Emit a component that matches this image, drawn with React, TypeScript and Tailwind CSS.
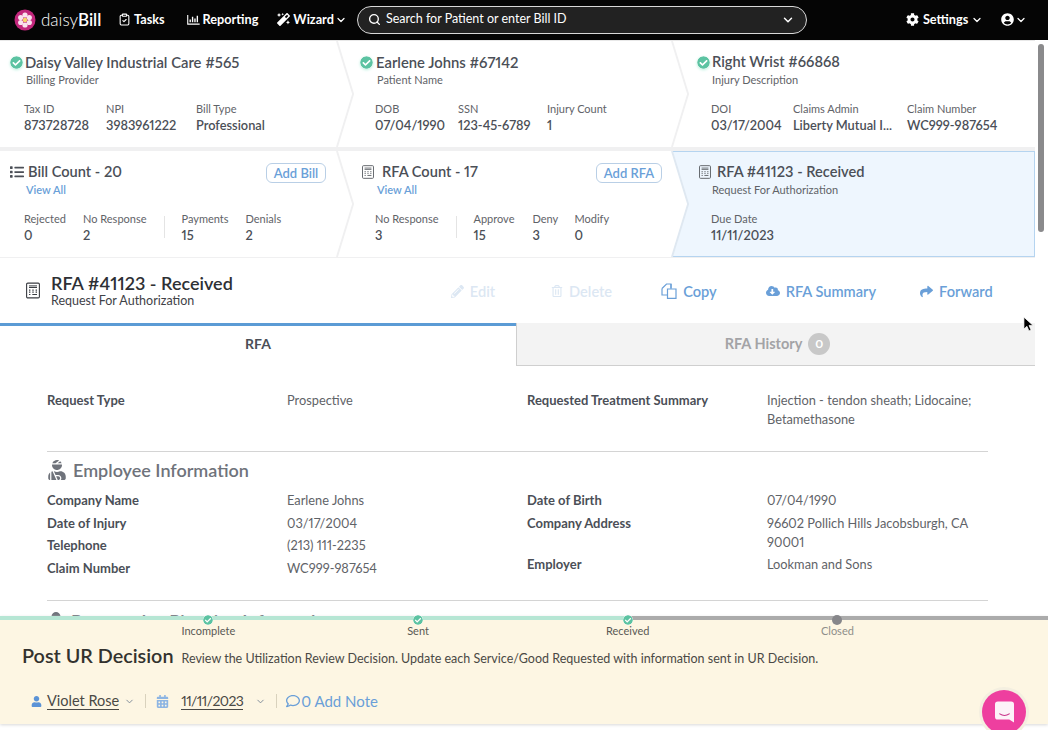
import { ChevronDown, ClipboardCheck, Search } from 'lucide-react';
import { type FC, type ReactNode } from 'react';
import {
  FaCalendarAlt,
  FaCheckCircle,
  FaCloudDownloadAlt,
  FaCog,
  FaList,
  FaMagic,
  FaPencilAlt,
  FaRegComment,
  FaRegTrashAlt,
  FaShare,
  FaUser,
  FaUserCircle,
  FaUserInjured,
} from 'react-icons/fa';

const RfaIcon: FC<{ className?: string }> = ({ className }) => (
  <svg viewBox="0 0 14 16" className={className} fill="none" stroke="currentColor">
    <rect x="0.6" y="0.6" width="12.8" height="14.8" rx="1.2" strokeWidth="1.1" />
    <path d="M3 3.4h8M3 5h8" strokeWidth="1" />
    <path d="M3 7.6h1.4M6.3 7.6h1.4M9.6 7.6H11M3 9.6h1.4M6.3 9.6h1.4M9.6 9.6H11M3 12h1.4M6.3 12H11" strokeWidth="1.1" />
  </svg>
);

const Logo: FC = () => (
  <svg viewBox="0 0 22 22" className="size-[22px]">
    <circle cx="11" cy="11" r="10.5" fill="#c2277c" />
    <g fill="#f9e3ee">
      <circle cx="11" cy="6" r="2.6" />
      <circle cx="15.3" cy="8.5" r="2.6" />
      <circle cx="15.3" cy="13.5" r="2.6" />
      <circle cx="11" cy="16" r="2.6" />
      <circle cx="6.7" cy="13.5" r="2.6" />
      <circle cx="6.7" cy="8.5" r="2.6" />
    </g>
    <circle cx="11" cy="11" r="2.2" fill="#f5d66b" />
  </svg>
);

const ReportIcon: FC = () => (
  <svg viewBox="0 0 14 12" className="h-[11px] w-[13px]" fill="none" stroke="white">
    <path d="M0.7 1v10h13" strokeWidth="1.2" />
    <path d="M3.4 9V6M6 9V3M8.6 9V5M11.2 9V2" strokeWidth="1.5" />
  </svg>
);

const CopyIcon: FC = () => (
  <svg viewBox="0 0 16 16" className="size-[16px]" fill="none" stroke="currentColor" strokeWidth="1.2">
    <path d="M1 5.5 5.5 1H10v5M1 5.5V12h5" />
    <path d="M6.5 6H15v9.300H6.500zM10 1v4" />
  </svg>
);

// white arrow point between two neighbouring cards
const CardPoint: FC<{ stroke?: string }> = ({ stroke = '#f0f0f1' }) => (
  <svg
    viewBox="0 0 20 106"
    preserveAspectRatio="none"
    className="absolute top-0 left-full z-10 h-full w-[19px] -translate-x-px"
  >
    <polygon points="0,0 1,0 18,53 1,106 0,106" fill="#ffffff" />
    <polyline points="1,0 18,53 1,106" fill="none" stroke={stroke} strokeWidth="2" />
  </svg>
);

const Stat: FC<{ label: string; value: string; className?: string }> = ({ label, value, className }) => (
  <div className={className}>
    <div className="text-[11px] leading-4 text-[#5f6368]">{label}</div>
    <div className="text-[12.8px] leading-4 font-semibold text-[#4b4f57]">{value}</div>
  </div>
);

const Check: FC = () => (
  <FaCheckCircle className="size-[13px] shrink-0 rounded-full text-[#5cc3a2] shadow-[0_1px_3px_#bdf0df]" />
);

const Divider: FC = () => <div className="mx-[17px] h-[22px] w-px self-center bg-[#e4e4e4]" />;

const AddButton: FC<{ label: string; className?: string }> = ({ label, className }) => (
  <button
    type="button"
    className={`h-5 rounded-[6px] border border-[#b9cfe6] text-[13px] leading-4 font-semibold text-[#6a9fd8] ${className ?? ''}`}
  >
    {label}
  </button>
);

const Action: FC<{ icon: ReactNode; label: string; className: string }> = ({ icon, label, className }) => (
  <div className={`flex items-center gap-[6px] pt-[2px] text-[14.6px] font-semibold ${className}`}>
    {icon}
    {label}
  </div>
);

const Row: FC<{ label: string; children: ReactNode }> = ({ label, children }) => (
  <div className="grid grid-cols-[240px_1fr]">
    <div className="font-bold text-[#4b4f57]">{label}</div>
    <div className="text-[12.8px] text-[#5f6368]">{children}</div>
  </div>
);

const Step: FC<{ label: string; done?: boolean }> = ({ label, done = true }) => (
  <div className="flex w-[209.7px] flex-col items-center">
    {done ? (
      <FaCheckCircle className="-mt-[5px] size-[10px] rounded-full bg-white text-[#5cc3a2]" />
    ) : (
      <div className="-mt-[5px] size-[10px] rounded-full bg-[#86868a]" />
    )}
    <div className={`-mt-px text-[11px] leading-[14px] ${done ? 'text-[#5a5a55]' : 'text-[#8f8f8a]'}`}>{label}</div>
  </div>
);

export default function App() {
  return (
    <div className="relative h-[730px] w-[1048px] overflow-hidden bg-white font-['Lato','Liberation_Sans',sans-serif] text-[#4b4f57] proportional-nums">
      <header className="flex h-10 items-center bg-[#050505] pb-px text-[12.7px] font-bold text-white">
        <div className="ml-[14px]">
          <Logo />
        </div>
        <div className="ml-[5px] w-[64px] text-[17px] leading-none font-light">
          daisy<span className="font-semibold">Bill</span>
        </div>
        <ClipboardCheck className="ml-[13px] size-[13px]" />
        <span className="ml-[3px]">Tasks</span>
        <div className="ml-[22px]">
          <ReportIcon />
        </div>
        <span className="ml-[3px]">Reporting</span>
        <FaMagic className="ml-[19px] size-[13px]" />
        <span className="ml-[3px]">Wizard</span>
        <ChevronDown className="ml-px size-[12px]" strokeWidth={2.5} />
        <div className="ml-[10px] flex h-[28px] w-[450px] items-center rounded-full border border-[#d8d8d8] bg-[#222222] pr-[11px] pl-[10px] text-[12.5px] font-normal">
          <Search className="size-[13px]" strokeWidth={2.5} />
          <span className="ml-[5px] flex-1">Search for Patient or enter Bill ID</span>
          <ChevronDown className="size-[14px]" strokeWidth={2.5} />
        </div>
        <FaCog className="ml-[99px] size-[13px]" />
        <span className="ml-[4px]">Settings</span>
        <ChevronDown className="ml-[3px] size-[12px]" strokeWidth={2.5} />
        <FaUserCircle className="ml-[18px] size-[13px]" />
        <ChevronDown className="ml-px size-[12px]" strokeWidth={2.5} />
      </header>

      <main className="h-[576px] w-[1035px] overflow-hidden">
        <section className="grid grid-cols-[337px_335px_363px] border-t border-[#e8e8e8] bg-[#f0f0f1] pb-[4px]">
          <div className="relative h-[106px] bg-white pt-[11px] pl-[10px]">
            <div className="flex items-center gap-[2px] text-[14.8px] leading-5 font-semibold">
              <Check />
              Daisy Valley Industrial Care #565
            </div>
            <div className="ml-[16px] text-[11px] leading-4 text-[#5f6368]">Billing Provider</div>
            <div className="mt-[13px] ml-[14px] flex">
              <Stat label="Tax ID" value="873728728" className="w-[82px]" />
              <Stat label="NPI" value="3983961222" className="w-[90px]" />
              <Stat label="Bill Type" value="Professional" />
            </div>
            <CardPoint />
          </div>
          <div className="relative h-[106px] bg-white pt-[11px] pl-[23px]">
            <div className="flex items-center gap-[3px] text-[14.8px] leading-5 font-semibold">
              <Check />
              Earlene Johns #67142
            </div>
            <div className="ml-[17px] text-[11px] leading-4 text-[#5f6368]">Patient Name</div>
            <div className="mt-[13px] ml-[15px] flex">
              <Stat label="DOB" value="07/04/1990" className="w-[83px]" />
              <Stat label="SSN" value="123-45-6789" className="w-[89px]" />
              <Stat label="Injury Count" value="1" />
            </div>
            <CardPoint />
          </div>
          <div className="h-[106px] bg-white pt-[11px] pl-[25px]">
            <div className="flex items-center gap-[2px] text-[14.6px] leading-5 font-semibold">
              <Check />
              Right Wrist #66868
            </div>
            <div className="ml-[15px] text-[11px] leading-4 text-[#5f6368]">Injury Description</div>
            <div className="mt-[13px] ml-[14px] flex">
              <Stat label="DOI" value="03/17/2004" className="w-[82px]" />
              <Stat label="Claims Admin" value="Liberty Mutual I..." className="w-[114px]" />
              <Stat label="Claim Number" value="WC999-987654" />
            </div>
          </div>
        </section>

        <section className="grid grid-cols-[337px_335px_363px] bg-[#f0f0f1] pb-[1px]">
          <div className="relative h-[106px] bg-white pt-[11px] pl-[10px]">
            <div className="flex items-center gap-[4px] text-[14.6px] leading-5 font-semibold">
              <FaList className="size-[14px]" />
              Bill Count - 20
              <AddButton label="Add Bill" className="absolute top-[12px] left-[266px] w-[60px]" />
            </div>
            <div className="ml-[16px] text-[11px] leading-4 font-semibold text-[#6a9fd8]">View All</div>
            <div className="mt-[13px] ml-[14px] flex">
              <Stat label="Rejected" value="0" className="w-[59px]" />
              <Stat label="No Response" value="2" />
              <Divider />
              <Stat label="Payments" value="15" className="w-[64px]" />
              <Stat label="Denials" value="2" />
            </div>
            <CardPoint />
          </div>
          <div className="relative h-[106px] bg-white pt-[11px] pl-[25px]">
            <div className="flex items-center gap-[8px] text-[14.6px] leading-5 font-semibold">
              <RfaIcon className="h-[14px] w-[12px] text-[#5f6368]" />
              RFA Count - 17
              <AddButton label="Add RFA" className="absolute top-[12px] left-[259px] w-[66px]" />
            </div>
            <div className="ml-[15px] text-[11px] leading-4 font-semibold text-[#6a9fd8]">View All</div>
            <div className="mt-[13px] ml-[13px] flex">
              <Stat label="No Response" value="3" />
              <Divider />
              <Stat label="Approve" value="15" className="w-[59px]" />
              <Stat label="Deny" value="3" className="w-[42px]" />
              <Stat label="Modify" value="0" />
            </div>
            <CardPoint stroke="#dfe8f1" />
          </div>
          <div className="h-[106px] border border-[#b5d4f0] bg-[#eef6fe] pt-[10px] pl-[26px]">
            <div className="flex items-center gap-[6px] text-[14.6px] leading-5 font-semibold">
              <RfaIcon className="h-[14px] w-[12px] text-[#5f6368]" />
              RFA #41123 - Received
            </div>
            <div className="ml-[13px] text-[11px] leading-4 text-[#5f6368]">Request For Authorization</div>
            <div className="mt-[13px] ml-[12px] flex">
              <Stat label="Due Date" value="11/11/2023" />
            </div>
          </div>
        </section>

        <section className="flex h-[65px] items-center pl-[26px]">
          <RfaIcon className="h-[17px] w-[14px] text-[#3a3d42]" />
          <div className="ml-[11px] pb-[2px]">
            <div className="text-[18px] leading-[22px] font-semibold text-[#2e3035]">RFA #41123 - Received</div>
            <div className="text-[12.5px] leading-[14px] text-[#3f4247]">Request For Authorization</div>
          </div>
          <Action icon={<FaPencilAlt className="size-[13px]" />} label="Edit" className="ml-[218px] text-[#dce7f3]" />
          <Action icon={<FaRegTrashAlt className="size-[12px]" />} label="Delete" className="ml-[56px] text-[#dce7f3]" />
          <Action icon={<CopyIcon />} label="Copy" className="ml-[49px] text-[#6a9fd8]" />
          <Action icon={<FaCloudDownloadAlt className="size-[14px]" />} label="RFA Summary" className="ml-[49px] text-[#6a9fd8]" />
          <Action icon={<FaShare className="size-[13px]" />} label="Forward" className="ml-[44px] text-[#6a9fd8]" />
        </section>

        <section className="flex h-[43px]">
          <div className="flex w-[516px] items-center justify-center border-t-[3px] border-[#5b9bd5] pb-[5px] text-[14px] font-bold text-[#4b4f57]">
            RFA
          </div>
          <div className="flex flex-1 items-center justify-center gap-[6px] border-b border-l border-[#cfcfcf] bg-[#f3f3f3] pl-[3px] text-[14.5px] font-bold text-[#a3a3a6]">
            RFA History
            <span className="flex size-[22px] items-center justify-center rounded-full bg-[#c8c8c8] text-[12px] text-white">0</span>
          </div>
        </section>

        <section className="mx-[47px] mt-[25px] w-[941px] text-[13px]">
          <div className="grid grid-cols-[480px_1fr] border-b border-[#d4d4d4] pb-[22px] leading-[19px]">
            <Row label="Request Type">Prospective</Row>
            <Row label="Requested Treatment Summary">Injection - tendon sheath; Lidocaine; Betamethasone</Row>
          </div>

          <div className="mt-[6px] flex items-center gap-[6px] text-[18px] leading-[24px] font-semibold text-[#6f737b]">
            <FaUserInjured className="size-[20px]" />
            Employee Information
          </div>
          <div className="mt-[9px] grid grid-cols-[480px_1fr] border-b border-[#d4d4d4] pb-[22px] leading-[19px]">
            <div className="flex flex-col gap-[3.500px]">
              <Row label="Company Name">Earlene Johns</Row>
              <Row label="Date of Injury">03/17/2004</Row>
              <Row label="Telephone">(213) 111-2235</Row>
              <Row label="Claim Number">WC999-987654</Row>
            </div>
            <div className="flex flex-col gap-[3.500px]">
              <Row label="Date of Birth">07/04/1990</Row>
              <Row label="Company Address">96602 Pollich Hills Jacobsburgh, CA 90001</Row>
              <Row label="Employer">Lookman and Sons</Row>
            </div>
          </div>

          <div className="mt-[8px] flex items-center gap-[6px] text-[18px] leading-[24px] font-semibold text-[#6f737b]">
            <FaUser className="size-[18px]" />
            Prospective Planning Information
          </div>
        </section>
      </main>

      <div className="absolute top-[44px] right-[4px] h-[188px] w-[6px] rounded-full bg-[#8a8a8c]" />

      <footer className="absolute top-[616px] left-0 h-[108px] w-full bg-[#fdf6e3] shadow-[0_1px_3px_#d8d8d8]">
        <div className="flex h-[4px]">
          <div className="w-[628px] bg-[#b6e6d4]" />
          <div className="flex-1 bg-[#ababab]" />
        </div>
        <div className="ml-[103.5px] flex">
          <Step label="Incomplete" />
          <Step label="Sent" />
          <Step label="Received" />
          <Step label="Closed" done={false} />
        </div>
        <div className="mt-[5px] ml-[22px] flex items-baseline gap-[8px]">
          <span className="text-[19.8px] leading-6 font-semibold text-[#33322e]">Post UR Decision</span>
          <span className="text-[12.5px] text-[#4a4945]">
            Review the Utilization Review Decision. Update each Service/Good Requested with information sent in UR Decision.
          </span>
        </div>
        <div className="mt-[21px] ml-[31px] flex items-center text-[14.5px] text-[#4a4945]">
          <FaUser className="size-[11px] text-[#5b93d6]" />
          <span className="ml-[5px] border-b border-[#4a4945] leading-[17px]">Violet Rose</span>
          <ChevronDown className="ml-[5px] size-[11px] text-[#7a8796]" />
          <div className="ml-[10px] h-[14px] w-px bg-[#d9d2bd]" />
          <FaCalendarAlt className="ml-[10px] size-[13px] text-[#8db5e3]" />
          <span className="ml-[12px] border-b border-[#4a4945] text-[14px] leading-[17px] tracking-[-0.6px]">11/11/2023</span>
          <ChevronDown className="ml-[12px] size-[11px] text-[#7a8796]" />
          <div className="ml-[10px] h-[14px] w-px bg-[#d9d2bd]" />
          <FaRegComment className="ml-[9px] size-[14px] text-[#6a9fd8]" />
          <span className="ml-px text-[15px] text-[#6a9fd8]">0 Add Note</span>
        </div>
      </footer>

      <div className="absolute top-[690px] left-[982px] flex size-[44px] items-center justify-center rounded-full bg-[#ee3f9f] shadow-[0_0_0_3px_#f4efe0]">
        <svg viewBox="0 0 20 22" className="h-[22px] w-[19px]">
          <path d="M3 0h14a3 3 0 0 1 3 3v19l-5-3H3a3 3 0 0 1-3-3V3a3 3 0 0 1 3-3z" fill="#fdf2f8" />
          <path d="M5 13c3 2 7 2 10 0" fill="none" stroke="#c9328a" strokeWidth="1.200" strokeLinecap="round" />
        </svg>
      </div>

      <svg viewBox="0 0 12 18" className="absolute top-[316px] left-[1023px] h-[17px] w-[11px]">
        <path d="M1 1v13l3.300-3 2.200 5 2.300-1-2.200-5H11z" fill="#000" stroke="#fff" strokeWidth="0.800" />
      </svg>
    </div>
  );
}
